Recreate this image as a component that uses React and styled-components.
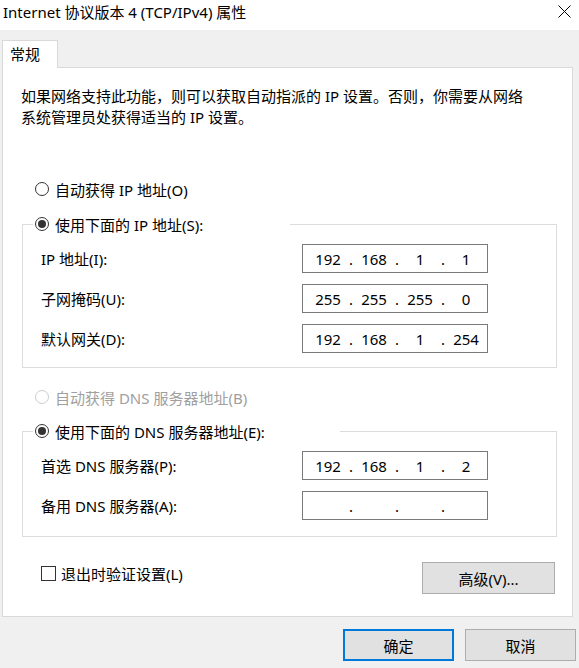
import React from 'react'
import styled, { createGlobalStyle } from 'styled-components'

const GlobalStyle = createGlobalStyle`
  html, body { margin: 0; padding: 0; background: #f0f0f0; }
  body {
    font-family: "Noto Sans", "Noto Sans CJK SC", sans-serif;
    font-size: 15px;
    color: #000;
  }
`

const Window = styled.div`
  width: 579px;
  height: 668px;
  background: #f0f0f0;
  display: flex;
  flex-direction: column;
  overflow: hidden;
`

const TitleBar = styled.div`
  height: 30px;
  background: #fff;
  display: flex;
  align-items: flex-start;
  justify-content: space-between;
  padding: 2px 8px 0 3px;
  box-sizing: border-box;
`

const Title = styled.span`
  font-size: 15px;
  line-height: 20px;
`

const CloseBtn = styled.span`
  display: flex;
  margin-top: 3px;
`

const TabStrip = styled.div`
  padding: 10px 0 0 2px;
  display: flex;
`

const Tab = styled.div`
  width: 56px;
  height: 28px;
  box-sizing: border-box;
  background: #fff;
  border: 1px solid #d9d9d9;
  border-bottom: none;
  padding: 2px 0 0 7px;
  line-height: 22px;
  margin-bottom: -1px;
  position: relative;
  z-index: 1;
`

const Panel = styled.div`
  margin: 0 6px 0 2px;
  height: 550px;
  box-sizing: border-box;
  background: #fff;
  border: 1px solid #d9d9d9;
  display: flex;
  flex-direction: column;
`

const Intro = styled.p`
  margin: 18px 0 0 18px;
  line-height: 21px;
`

const OptionRow = styled.label`
  display: flex;
  align-items: center;
  gap: 6px;
  height: 20px;
  margin: ${p => p.$top}px 0 0 32px;
  color: ${p => (p.$disabled ? '#a0a0a0' : '#000')};
`

const RadioDot = styled.span`
  width: 14px;
  height: 14px;
  box-sizing: border-box;
  border-radius: 50%;
  border: 1px solid ${p => (p.$disabled ? '#cccccc' : '#333')};
  background: #fff;
  display: flex;
  align-items: center;
  justify-content: center;
  &::after {
    content: '';
    width: 8px;
    height: 8px;
    border-radius: 50%;
    background: ${p => (p.$checked ? '#333' : 'transparent')};
  }
`

const Group = styled.fieldset`
  margin: ${p => p.$top}px 15px 0 19px;
  padding: 0 0 ${p => p.$bottom}px 0;
  border: 1px solid #dcdcdc;
  min-width: 0;
  display: flex;
  flex-direction: column;
  gap: 11px;
`

const Legend = styled.legend`
  margin-left: 10px;
  padding: 0 0 0 2px;
  width: ${p => p.$width}px;
  height: 20px;
  display: flex;
  align-items: center;
  gap: 6px;
  background: #fff;
  box-sizing: border-box;
`

const FieldRow = styled.div`
  display: flex;
  align-items: center;
  padding-left: 18px;
  &:first-of-type { margin-top: 10px; }
`

const FieldLabel = styled.span`
  width: 261px;
`

const IpBox = styled.div`
  width: 186px;
  height: 29px;
  box-sizing: border-box;
  border: 1px solid #7a7a7a;
  display: flex;
  align-items: center;
  padding-left: 7px;
  background: #fff;
`

const Octet = styled.span`
  width: 36px;
  text-align: center;
`

const Dot = styled.span`
  width: 10px;
  text-align: center;
`

const BottomRow = styled.div`
  display: flex;
  justify-content: space-between;
  align-items: flex-start;
  margin: 25px 17px 0 38px;
`

const CheckRow = styled.label`
  display: flex;
  align-items: center;
  gap: 5px;
  height: 20px;
  margin-top: 1px;
`

const CheckBox = styled.span`
  width: 15px;
  height: 15px;
  box-sizing: border-box;
  border: 1px solid #333;
  background: #fff;
`

const Button = styled.button`
  width: ${p => p.$width || 111}px;
  height: 32px;
  box-sizing: border-box;
  font: inherit;
  color: #000;
  background: #e1e1e1;
  border: ${p => (p.$primary ? '2px solid #0078d7' : '1px solid #adadad')};
  padding: 0;
`

const Footer = styled.div`
  display: flex;
  justify-content: flex-end;
  gap: 11px;
  padding: 12px 3px 0 0;
`

const IpInput = ({ value }) => (
  <IpBox>
    {value.map((v, i) => (
      <React.Fragment key={i}>
        <Octet>{v}</Octet>
        {i < 3 && <Dot>.</Dot>}
      </React.Fragment>
    ))}
  </IpBox>
)

const App = () => {
  return (
    <Window>
      <GlobalStyle />
      <TitleBar>
        <Title>Internet 协议版本 4 (TCP/IPv4) 属性</Title>
        <CloseBtn>
          <svg width="13" height="13" viewBox="0 0 13 13">
            <path d="M0.5 0.5 L12.5 12.5 M12.5 0.5 L0.5 12.5" stroke="#000" strokeWidth="1" fill="none" />
          </svg>
        </CloseBtn>
      </TitleBar>

      <TabStrip>
        <Tab>常规</Tab>
      </TabStrip>

      <Panel>
        <Intro>
          如果网络支持此功能，则可以获取自动指派的 IP 设置。否则，你需要从网络
          <br />
          系统管理员处获得适当的 IP 设置。
        </Intro>

        <OptionRow $top={51}>
          <RadioDot />
          自动获得 IP 地址(O)
        </OptionRow>

        <Group $top={15} $bottom={14}>
          <Legend $width={257}>
            <RadioDot $checked />
            使用下面的 IP 地址(S):
          </Legend>
          <FieldRow>
            <FieldLabel>IP 地址(I):</FieldLabel>
            <IpInput value={['192', '168', '1', '1']} />
          </FieldRow>
          <FieldRow>
            <FieldLabel>子网掩码(U):</FieldLabel>
            <IpInput value={['255', '255', '255', '0']} />
          </FieldRow>
          <FieldRow>
            <FieldLabel>默认网关(D):</FieldLabel>
            <IpInput value={['192', '168', '1', '254']} />
          </FieldRow>
        </Group>

        <OptionRow $top={19} $disabled>
          <RadioDot $disabled />
          自动获得 DNS 服务器地址(B)
        </OptionRow>

        <Group $top={14} $bottom={16}>
          <Legend $width={307}>
            <RadioDot $checked />
            使用下面的 DNS 服务器地址(E):
          </Legend>
          <FieldRow>
            <FieldLabel>首选 DNS 服务器(P):</FieldLabel>
            <IpInput value={['192', '168', '1', '2']} />
          </FieldRow>
          <FieldRow>
            <FieldLabel>备用 DNS 服务器(A):</FieldLabel>
            <IpInput value={['', '', '', '']} />
          </FieldRow>
        </Group>

        <BottomRow>
          <CheckRow>
            <CheckBox />
            退出时验证设置(L)
          </CheckRow>
          <Button $width={133}>高级(V)...</Button>
        </BottomRow>
      </Panel>

      <Footer>
        <Button $primary>确定</Button>
        <Button>取消</Button>
      </Footer>
    </Window>
  )
}

export default App
